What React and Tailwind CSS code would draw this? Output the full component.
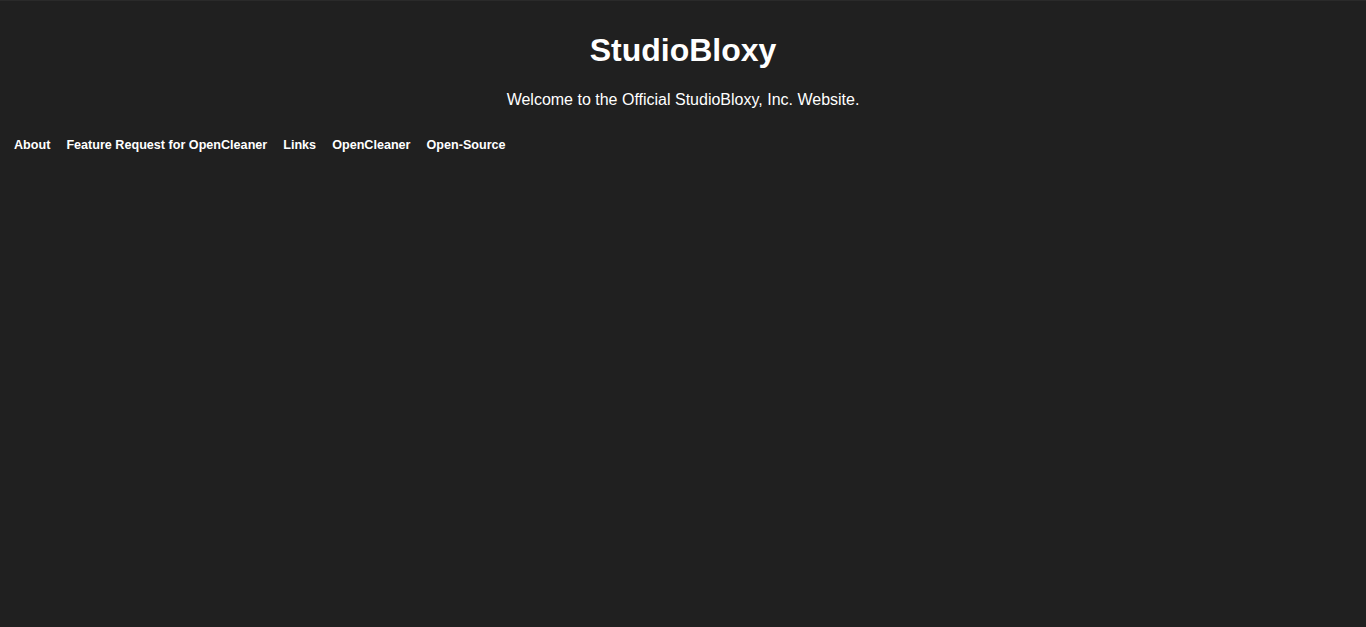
export default function App() {
  const links = ['About', 'Feature Request for OpenCleaner', 'Links', 'OpenCleaner', 'Open-Source'];
  return (
    <div className="min-h-screen bg-[#202020] border-t border-[#2a2a2a] text-white font-['Liberation_Sans',Arial,sans-serif]">
      <header className="pt-[31px] text-center">
        <h1 className="text-[32px] leading-[36px] font-bold">StudioBloxy</h1>
        <p className="mt-[23px] text-[16px] leading-[18px]">Welcome to the Official StudioBloxy, Inc. Website.</p>
      </header>
      <nav className="mt-[28px] px-[14px] flex gap-[16px] text-[12.6px] leading-[16px] font-bold">
        {links.map((l) => (
          <a key={l} href="#" className="text-white">{l}</a>
        ))}
      </nav>
    </div>
  );
}
